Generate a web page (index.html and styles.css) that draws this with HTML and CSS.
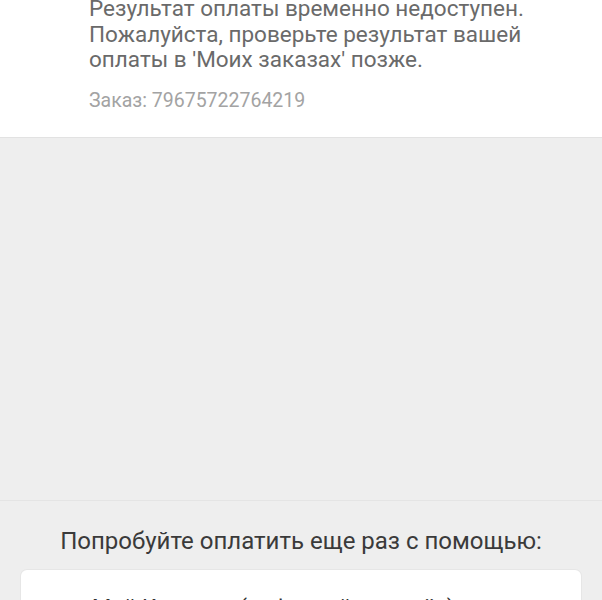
FILE: index.html
```html
<!DOCTYPE html>
<html lang="ru">
<head>
<meta charset="utf-8">
<title>Результат оплаты</title>
<link rel="stylesheet" href="styles.css">
</head>
<body>
<div class="page">
  <section class="result">
    <p class="message">Результат оплаты временно недоступен.<br>Пожалуйста, проверьте результат вашей<br>оплаты в 'Моих заказах' позже.</p>
    <p class="order">Заказ: 79675722764219</p>
  </section>
  <div class="spacer"></div>
  <section class="retry">
    <h2 class="retry-title">Попробуйте оплатить еще раз с помощью:</h2>
    <div class="card">
      <div class="card-row">Мой Кошелек (цифровой кошелёк)</div>
    </div>
  </section>
</div>
</body>
</html>
```
FILE: styles.css
```css
html, body {
  margin: 0;
  padding: 0;
  background: #eeeeee;
  font-family: Roboto, "Noto Sans", sans-serif;
}
.page {
  width: 602px;
  height: 600px;
  overflow: hidden;
  display: flex;
  flex-direction: column;
}
.result {
  background: #ffffff;
  border-bottom: 1px solid #e2e2e2;
  padding: 0 10px 0 89px;
  height: 138px;
  box-sizing: border-box;
  flex: none;
}
.message {
  margin: -4px 0 0;
  font-size: 22.5px;
  line-height: 25.5px;
  color: #6a6a6a;
  white-space: nowrap;
}
.order {
  margin: 16px 0 0;
  font-size: 19.5px;
  line-height: 24px;
  color: #a3a3a3;
}
.spacer {
  height: 362px;
  flex: none;
  border-bottom: 1px solid #e4e4e4;
}
.retry {
  padding: 0 21px;
}
.retry-title {
  margin: 26px 0 0;
  font-weight: 400;
  font-size: 24px;
  line-height: 28px;
  color: #3a3a3a;
  text-align: center;
}
.card {
  margin-top: 15px;
  background: #ffffff;
  border-radius: 6px;
  box-shadow: 0 0 0 1px #e6e6e6;
  height: 120px;
}
.card-row {
  padding: 25px 0 0 71px;
  font-size: 22px;
  line-height: 26px;
  color: #333333;
}
```
